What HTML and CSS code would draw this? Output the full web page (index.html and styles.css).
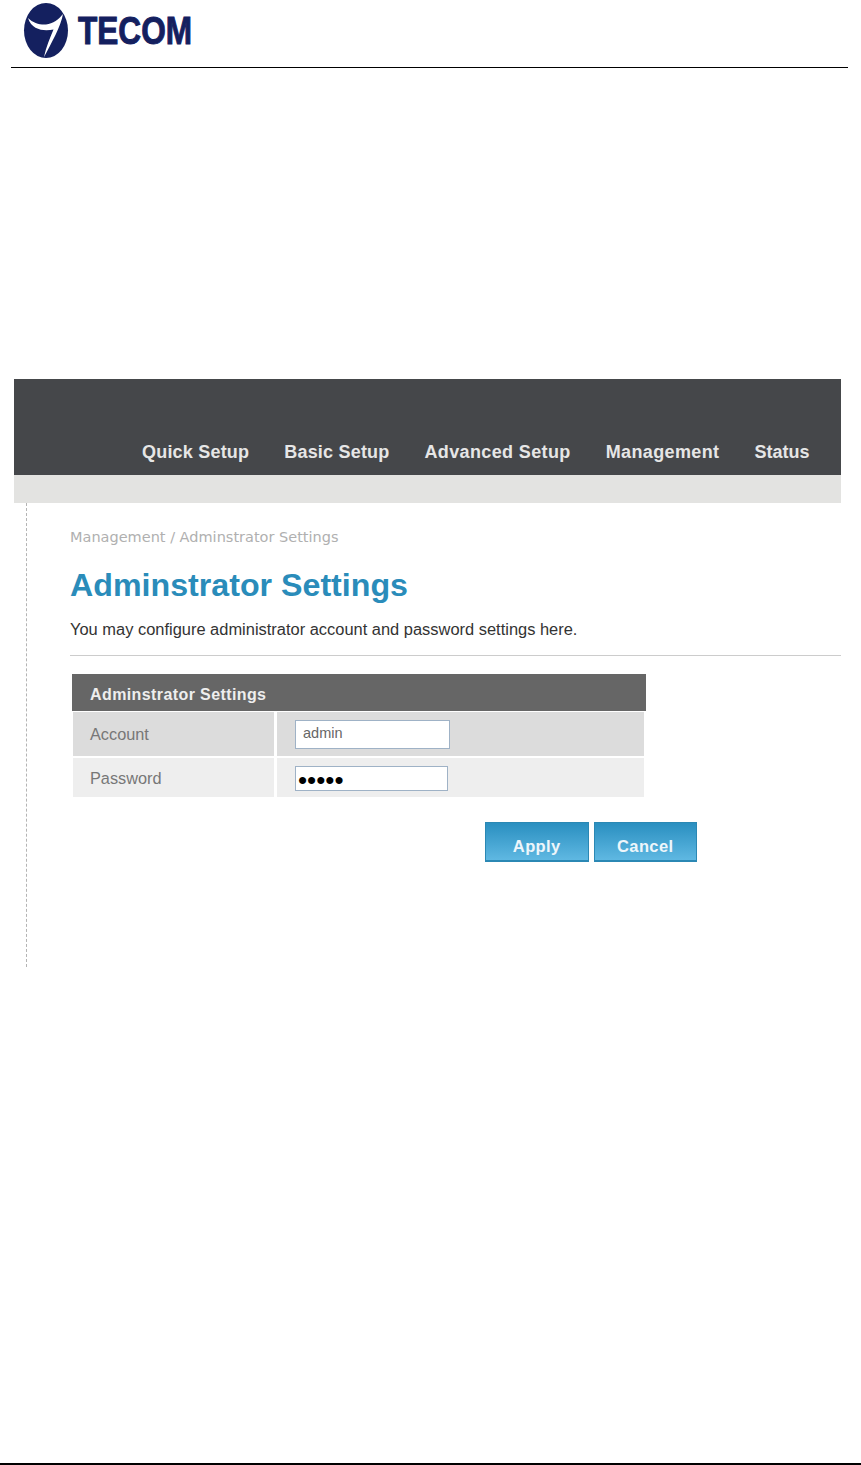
FILE: index.html
```html
<!DOCTYPE html>
<html lang="en">
<head>
<meta charset="utf-8">
<title>Adminstrator Settings</title>
<link rel="stylesheet" href="styles.css">
</head>
<body>
<header class="doc-header">
  <div class="logo">
    <svg class="logo-mark" width="46" height="58" viewBox="0 0 46 58" aria-hidden="true">
      <ellipse cx="23" cy="28.5" rx="22" ry="27.5" fill="#14205f"/>
      <path d="M5 16C10 21 17 23 23 22.5C30 22 36 17 40 12C38 24 28 42 21 55C23 45 27 36 30.5 27.5C22 29 9 29 5 16Z" fill="#fff"/>
    </svg>
    <span class="wordmark">TECOM</span>
  </div>
</header>
<main class="panel">
  <nav class="nav">
    <a>Quick Setup</a>
    <a>Basic Setup</a>
    <a class="nav-wide">Advanced Setup</a>
    <a class="nav-wide">Management</a>
    <a class="nav-tight">Status</a>
  </nav>
  <div class="band"></div>
  <section class="content">
    <p class="crumb">Management / Adminstrator Settings</p>
    <h1 class="title">Adminstrator Settings</h1>
    <p class="intro">You may configure administrator account and password settings here.</p>
    <hr class="rule">
    <form class="form">
      <div class="form-head">Adminstrator Settings</div>
      <div class="row row-a">
        <label class="cell-label">Account</label>
        <div class="cell-field"><input class="input input-a" type="text" value="admin"></div>
      </div>
      <div class="row row-b">
        <label class="cell-label">Password</label>
        <div class="cell-field"><input class="input input-b" type="password" value="admin"></div>
      </div>
      <div class="actions">
        <button class="btn" type="button">Apply</button>
        <button class="btn" type="button">Cancel</button>
      </div>
    </form>
  </section>
</main>
<footer class="doc-footer"></footer>
</body>
</html>
```
FILE: styles.css
```css
* { box-sizing: border-box; }
html, body { margin: 0; padding: 0; }
body {
  height: 1465px;
  background: #fff;
  font-family: "Liberation Sans", Arial, sans-serif;
  display: flex;
  flex-direction: column;
  overflow: hidden;
}
.doc-header {
  height: 68px;
  margin: 0 13px 0 11px;
  border-bottom: 1px solid #000;
  padding: 2px 0 0 12px;
}
.logo { display: flex; align-items: flex-start; }
.logo-mark { flex: none; display: block; }
.wordmark {
  display: block;
  margin: 7px 0 0 9px;
  font-size: 39px;
  line-height: 44px;
  font-weight: 700;
  color: #14205f;
  -webkit-text-stroke: 1px #14205f;
  transform: scaleX(0.81);
  transform-origin: left center;
}
.panel {
  margin: 311px 20px 0 14px;
  height: 588px;
  display: flex;
  flex-direction: column;
}
.nav {
  height: 96px;
  background: #45474a;
  display: flex;
  align-items: flex-end;
  gap: 35px;
  padding: 0 0 12px 128px;
}
.nav a {
  color: #e6e6e6;
  font-size: 18px;
  line-height: 22px;
  font-weight: 700;
  letter-spacing: 0.2px;
}
.nav .nav-wide { letter-spacing: 0.37px; }
.nav .nav-tight { letter-spacing: 0; }
.band { height: 28px; background: #e3e3e1; }
.content {
  margin-left: 12px;
  height: 464px;
  border-left: 1px dashed #b4b4b4;
  padding: 25px 0 0 43px;
}
.crumb {
  margin: 0;
  font-family: "DejaVu Sans", sans-serif;
  font-size: 14.5px;
  line-height: 18px;
  color: #b0b0b0;
}
.title {
  margin: 20px 0 0;
  font-size: 32.2px;
  line-height: 38px;
  font-weight: 700;
  color: #2a8cba;
}
.intro {
  margin: 15px 0 0;
  font-size: 16.45px;
  line-height: 20px;
  color: #333;
}
.rule {
  margin: 16px 0 0;
  border: 0;
  border-top: 1px solid #ccc;
}
.form { margin: 18px 0 0 2px; width: 625px; }
.form-head {
  width: 574px;
  height: 37px;
  background: #666;
  color: #eee;
  font-size: 16px;
  line-height: 41px;
  font-weight: 700;
  letter-spacing: 0.4px;
  padding-left: 18px;
}
.row {
  width: 571px;
  margin: 1px 0 0 1px;
  display: grid;
  grid-template-columns: 201px 367px;
  gap: 3px;
}
.row-a { height: 44px; }
.row-b { height: 39px; margin-top: 2px; }
.cell-label {
  font-size: 16.3px;
  padding-left: 17px;
  color: #777;
  display: flex;
  align-items: center;
}
.cell-field { display: flex; padding-left: 18px; }
.row-a .cell-label, .row-a .cell-field { background: #dcdcdc; }
.row-b .cell-label, .row-b .cell-field { background: #eee; }
.row-b .cell-label { padding-top: 1px; }
.input {
  display: block;
  border: 1px solid #9fb2c6;
  background: #fff;
  padding: 0 7px;
  font-family: "Liberation Sans", Arial, sans-serif;
  font-size: 14.5px;
  color: #666;
  outline: 0;
}
.input-a { width: 155px; height: 29px; margin-top: 8px; padding-bottom: 3px; }
.input-b { width: 153px; height: 25px; margin-top: 8px; padding: 3px 0 0 2px; color: #000; font-size: 26px; }
.actions {
  margin-top: 25px;
  padding-left: 413px;
  display: flex;
  gap: 5px;
}
.btn {
  width: 104px;
  height: 40px;
  padding: 9px 0 0;
  border: 1px solid #2b88b4;
  border-bottom-width: 2px;
  background: linear-gradient(#2a8fc0, #5fb8e2);
  color: #eef6fb;
  font-family: "Liberation Sans", Arial, sans-serif;
  font-size: 16.5px;
  font-weight: 700;
  letter-spacing: 0.4px;
  border-radius: 0;
}
.doc-footer {
  margin-top: auto;
  height: 2px;
  background: #000;
}
```
